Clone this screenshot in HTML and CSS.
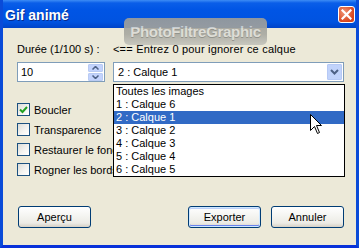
FILE: index.html
```html
<!DOCTYPE html>
<html lang="fr">
<head>
  <meta charset="UTF-8" />
  <title>Gif animé</title>
  <link rel="stylesheet" href="styles.css">
</head>
<body>
  <div class="window">
    <div class="titlebar">
      <span class="title">Gif animé</span>
      <div class="close">
        <svg width="11" height="11" viewBox="0 0 11 11"><path d="M1.5 1.5L9.5 9.5M9.5 1.5L1.5 9.5" stroke="#fff" stroke-width="2.2" stroke-linecap="square"/></svg>
      </div>
    </div>

    <div class="content">
      <div class="labels">
        <span class="lbl-duree">Durée (1/100 s) :</span>
        <span class="lbl-hint">&lt;== Entrez 0 pour ignorer ce calque</span>
      </div>

      <div class="fields">
        <div class="spin">
          <span class="spin-val">10</span>
          <div class="spin-btns">
            <div class="spin-btn"><svg width="7" height="4" viewBox="0 0 7 4"><path d="M0.5 3.5L3.5 0.5L6.5 3.5" fill="none" stroke="#4d6185" stroke-width="1.5"/></svg></div>
            <div class="spin-btn"><svg width="7" height="4" viewBox="0 0 7 4"><path d="M0.5 0.5L3.5 3.5L6.5 0.5" fill="none" stroke="#4d6185" stroke-width="1.5"/></svg></div>
          </div>
        </div>
        <div class="combo">
          <span class="combo-val">2 : Calque 1</span>
          <div class="combo-btn"><svg width="9" height="6" viewBox="0 0 9 6"><path d="M1 1L4.5 4.5L8 1" fill="none" stroke="#4d6185" stroke-width="2"/></svg></div>
        </div>
      </div>

      <div class="checks">
        <div class="check-row">
          <span class="box checked"><svg width="9" height="8" viewBox="0 0 9 8"><path d="M1 3.5L3.5 6L8 1" fill="none" stroke="#21a121" stroke-width="2"/></svg></span>
          <span>Boucler</span>
        </div>
        <div class="check-row"><span class="box"></span><span>Transparence</span></div>
        <div class="check-row"><span class="box"></span><span>Restaurer le fond</span></div>
        <div class="check-row"><span class="box"></span><span>Rogner les bords</span></div>
      </div>

      <div class="buttons">
        <button class="btn">Aperçu</button>
        <div class="spacer"></div>
        <button class="btn btn-default">Exporter</button>
        <button class="btn">Annuler</button>
      </div>
    </div>

    <div class="watermark">PhotoFiltreGraphic</div>

    <ul class="dropdown">
      <li>Toutes les images</li>
      <li>1 : Calque 6</li>
      <li class="selected">2 : Calque 1</li>
      <li>3 : Calque 2</li>
      <li>4 : Calque 3</li>
      <li>5 : Calque 4</li>
      <li>6 : Calque 5</li>
    </ul>

    <svg class="cursor" width="13" height="21" viewBox="0 0 13 21"><path d="M0.5 0.5L0.5 16.5L4.5 12.5L7.5 19.5L9.5 18.5L6.5 11.5L11.5 11.5Z" fill="#fff" stroke="#000" stroke-width="1"/></svg>
  </div>
</body>
</html>
```

FILE: styles.css
```css
body {
  margin: 0;
  font-family: 'Liberation Sans', Arial, sans-serif;
  font-size: 11px;
  color: #000;
}
.window {
  position: relative;
  width: 359px;
  height: 248px;
  box-sizing: border-box;
  background: #ece9d8;
  border: 3px solid #0831d9;
  border-top: none;
  border-left-color: #0a4bd8;
  border-right-color: #0a4bd8;
  overflow: hidden;
}
.titlebar {
  display: flex;
  align-items: center;
  justify-content: space-between;
  height: 28px;
  margin: 0 -3px;
  padding: 0 4px 0 5px;
  background: linear-gradient(#3d8cf5 0, #0a5ee8 3px, #0055e5 10px, #0053e0 22px, #0044c8 28px);
}
.title {
  color: #fff;
  font-weight: bold;
  font-size: 14px;
  text-shadow: 1px 1px 0 #0a2b8a;
  margin-top: 1px;
}
.close {
  display: flex;
  align-items: center;
  justify-content: center;
  width: 15px;
  height: 15px;
  border: 1px solid #fff;
  border-radius: 3px;
  background: radial-gradient(circle at 35% 35%, #f09575, #d8451e 70%);
  margin-top: 1px;
}
.content {
  padding: 15px 0 0 14px;
}
.labels {
  display: flex;
  line-height: 13px;
}
.lbl-duree {
  width: 96px;
}
.lbl-hint {
  letter-spacing: 0.2px;
}
.fields {
  display: flex;
  gap: 8px;
  margin-top: 6px;
}
.spin, .combo {
  display: flex;
  align-items: center;
  height: 20px;
  box-sizing: border-box;
  border: 1px solid #7f9db9;
  background: #fff;
  font-size: 11px;
}
.spin {
  width: 88px;
}
.spin-val {
  flex: 1;
  padding-left: 3px;
}
.spin-btns {
  display: flex;
  flex-direction: column;
  gap: 1px;
  margin-right: 1px;
}
.spin-btn {
  display: flex;
  align-items: center;
  justify-content: center;
  width: 15px;
  height: 8px;
  background: #c3d3fd;
  border: 1px solid #b9cbf3;
  box-sizing: border-box;
  border-radius: 1px;
}
.combo {
  width: 231px;
}
.combo-val {
  flex: 1;
  padding-left: 4px;
}
.combo-btn {
  display: flex;
  align-items: center;
  justify-content: center;
  width: 15px;
  height: 16px;
  margin-right: 1px;
  background: #c1d3fb;
  border: 1px solid #b6c9f5;
  box-sizing: border-box;
  border-radius: 1px;
}
.checks {
  display: flex;
  flex-direction: column;
  gap: 7px;
  margin-top: 21px;
}
.check-row {
  display: flex;
  align-items: center;
  gap: 4px;
  height: 13px;
  font-size: 11px;
  white-space: nowrap;
}
.box {
  display: flex;
  align-items: center;
  justify-content: center;
  width: 13px;
  height: 13px;
  box-sizing: border-box;
  border: 1px solid #1c5180;
  background: linear-gradient(135deg, #dcdcd7, #f5f5f3 60%, #fff);
}
.buttons {
  display: flex;
  gap: 10px;
  margin-top: 30px;
  padding-left: 1px;
  padding-right: 12px;
}
.spacer {
  flex: 1;
}
.btn {
  width: 73px;
  height: 22px;
  border: 1px solid #003c74;
  border-radius: 3px;
  background: linear-gradient(#ffffff, #f3f3ef 50%, #ecebe6 80%, #d6d0c5);
  font-family: 'Liberation Sans', Arial, sans-serif;
  font-size: 11px;
  color: #000;
  padding: 0;
}
.btn-default {
  box-shadow: inset 0 0 0 1px #cee7ff, inset 0 -1px 0 1px #6982ee, inset 0 1px 0 1px #bccff8;
}
.watermark {
  position: absolute;
  left: 121px;
  top: 18px;
  width: 143px;
  height: 27px;
  border-radius: 5px;
  background: linear-gradient(#9e9e98, #a8a8a0 60%, #c4c4bc);
  opacity: 0.9;
  color: #dcdcd6;
  font-weight: bold;
  font-size: 15px;
  line-height: 27px;
  text-align: center;
  text-shadow: 0 1px 0 #8a8a84;
  letter-spacing: -0.3px;
}
.dropdown {
  position: absolute;
  left: 110px;
  top: 84px;
  width: 232px;
  box-sizing: border-box;
  margin: 0;
  padding: 0;
  list-style: none;
  border: 1px solid #000;
  background: #fff;
  font-size: 11px;
}
.dropdown li {
  height: 13px;
  line-height: 13px;
  padding-left: 2px;
}
.dropdown .selected {
  background: #316ac5;
  color: #fff;
}
.cursor {
  position: absolute;
  left: 307px;
  top: 114px;
}
```
